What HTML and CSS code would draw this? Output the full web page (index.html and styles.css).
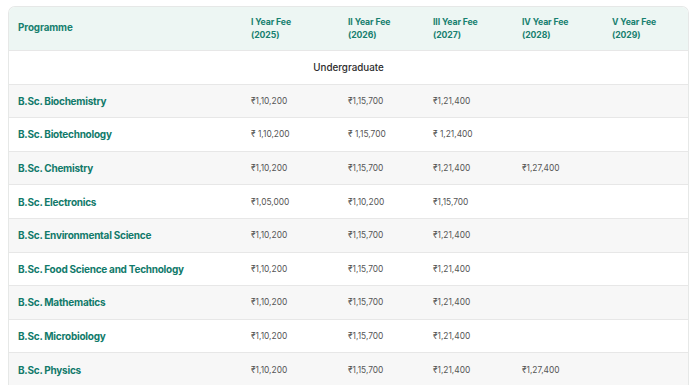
FILE: index.html
```html
<!DOCTYPE html>
<html lang="en">
<head>
<meta charset="utf-8">
<title>Fee Structure</title>
<link rel="stylesheet" href="styles.css">
</head>
<body>
<div class="table-wrap">
  <table class="fees">
    <colgroup>
      <col class="c-prog"><col class="c1"><col class="c2"><col class="c3"><col class="c4"><col class="c5">
    </colgroup>
    <thead>
      <tr>
        <th>Programme</th>
        <th>I Year Fee<br>(2025)</th>
        <th>II Year Fee<br>(2026)</th>
        <th>III Year Fee<br>(2027)</th>
        <th>IV Year Fee<br>(2028)</th>
        <th>V Year Fee<br>(2029)</th>
      </tr>
    </thead>
    <tbody>
      <tr class="group"><td colspan="6">Undergraduate</td></tr>
      <tr class="alt"><td class="prog">B.Sc. Biochemistry</td><td>₹1,10,200</td><td>₹1,15,700</td><td>₹1,21,400</td><td></td><td></td></tr>
      <tr><td class="prog">B.Sc. Biotechnology</td><td>₹ 1,10,200</td><td>₹ 1,15,700</td><td>₹ 1,21,400</td><td></td><td></td></tr>
      <tr class="alt"><td class="prog">B.Sc. Chemistry</td><td>₹1,10,200</td><td>₹1,15,700</td><td>₹1,21,400</td><td>₹1,27,400</td><td></td></tr>
      <tr><td class="prog">B.Sc. Electronics</td><td>₹1,05,000</td><td>₹1,10,200</td><td>₹1,15,700</td><td></td><td></td></tr>
      <tr class="alt"><td class="prog">B.Sc. Environmental Science</td><td>₹1,10,200</td><td>₹1,15,700</td><td>₹1,21,400</td><td></td><td></td></tr>
      <tr><td class="prog">B.Sc. Food Science and Technology</td><td>₹1,10,200</td><td>₹1,15,700</td><td>₹1,21,400</td><td></td><td></td></tr>
      <tr class="alt"><td class="prog">B.Sc. Mathematics</td><td>₹1,10,200</td><td>₹1,15,700</td><td>₹1,21,400</td><td></td><td></td></tr>
      <tr><td class="prog">B.Sc. Microbiology</td><td>₹1,10,200</td><td>₹1,15,700</td><td>₹1,21,400</td><td></td><td></td></tr>
      <tr class="alt"><td class="prog">B.Sc. Physics</td><td>₹1,10,200</td><td>₹1,15,700</td><td>₹1,21,400</td><td>₹1,27,400</td><td></td></tr>
    </tbody>
  </table>
</div>
</body>
</html>
```

FILE: styles.css
```css
html, body {
  margin: 0;
  padding: 0;
  background: #ffffff;
}
body {
  padding: 6px 11px 0 8px;
  font-family: Inter, "Noto Sans", sans-serif;
}
.table-wrap {
  border: 1px solid #e6e8e7;
  border-bottom: none;
  border-radius: 7px 7px 0 0;
  overflow: hidden;
}
.fees {
  width: 100%;
  border-collapse: collapse;
  table-layout: fixed;
}
.c-prog { width: 233px; }
.c1 { width: 97px; }
.c2 { width: 85px; }
.c3 { width: 89px; }
.c4 { width: 90px; }
.fees thead tr {
  background: #edf6f3;
}
.fees th {
  text-align: left;
  vertical-align: middle;
  color: #17806f;
  font-weight: 700;
  font-size: 8.7px;
  line-height: 12.5px;
  letter-spacing: -0.1px;
  padding: 0 9px;
  height: 43px;
}
.fees th:first-child {
  font-size: 9.8px;
}
.fees td {
  height: 32.6px;
  padding: 0 9px;
  font-size: 8.4px;
  color: #555555;
  border-top: 1px solid #e7e7e7;
  vertical-align: middle;
  white-space: nowrap;
}
.fees tr.alt td {
  background: #f7f7f7;
}
.fees td.prog {
  color: #117a6a;
  font-weight: 700;
  font-size: 10px;
  letter-spacing: -0.25px;
}
.fees tr.group td {
  text-align: center;
  color: #2b2b2b;
  font-weight: 500;
  font-size: 9.8px;
}
```
